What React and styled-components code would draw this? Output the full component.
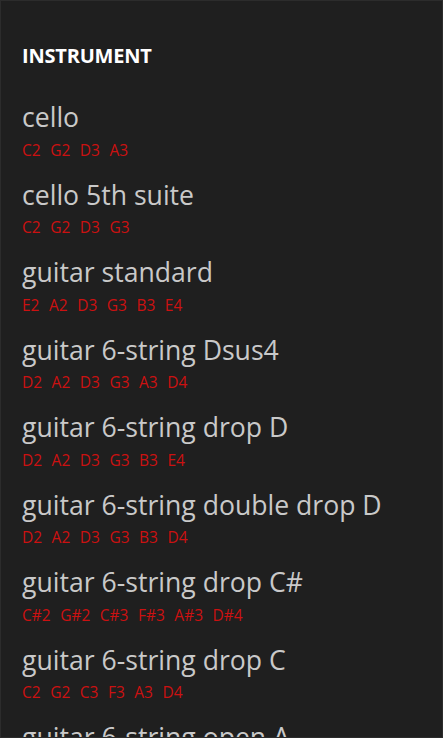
import React from "react";
import styled, { createGlobalStyle } from "styled-components";

const Global = createGlobalStyle`
  html, body { margin: 0; padding: 0; background: #1f1f1f; }
  * { box-sizing: border-box; }
`;

const Page = styled.div`
  height: 738px;
  overflow: hidden;
  background: #1f1f1f;
  border: 1px solid #2c2c2c;
  padding: 43px 0 0 21px;
  font-family: "Open Sans", "Noto Sans", sans-serif;
`;

const Header = styled.h1`
  margin: 0 0 32px;
  font-size: 20px;
  line-height: 24px;
  font-weight: 700;
  color: #ffffff;
  letter-spacing: -0.2px;
`;

const List = styled.ul`
  list-style: none;
  margin: 0;
  padding: 0;
`;

const Item = styled.li`
  height: 77.5px;
`;

const Title = styled.div`
  font-size: 26.6px;
  line-height: 34px;
  color: #c9c9c9;
  white-space: nowrap;
`;

const Notes = styled.div`
  display: flex;
  gap: 9.5px;
  margin-top: 5.5px;
  font-size: 15.5px;
  line-height: 20px;
  color: #cc1111;
`;

const items = [
  ["cello", ["C2", "G2", "D3", "A3"]],
  ["cello 5th suite", ["C2", "G2", "D3", "G3"]],
  ["guitar standard", ["E2", "A2", "D3", "G3", "B3", "E4"]],
  ["guitar 6-string Dsus4", ["D2", "A2", "D3", "G3", "A3", "D4"]],
  ["guitar 6-string drop D", ["D2", "A2", "D3", "G3", "B3", "E4"]],
  ["guitar 6-string double drop D", ["D2", "A2", "D3", "G3", "B3", "D4"]],
  ["guitar 6-string drop C#", ["C#2", "G#2", "C#3", "F#3", "A#3", "D#4"]],
  ["guitar 6-string drop C", ["C2", "G2", "C3", "F3", "A3", "D4"]],
  ["guitar 6-string open A", ["E2", "A2", "C#3", "E3", "A3", "E4"]],
];

export default function App() {
  return (
    <>
      <Global />
      <Page>
        <Header>INSTRUMENT</Header>
        <List>
          {items.map(([name, notes]) => (
            <Item key={name}>
              <Title>{name}</Title>
              <Notes>
                {notes.map((n, i) => (
                  <span key={i}>{n}</span>
                ))}
              </Notes>
            </Item>
          ))}
        </List>
      </Page>
    </>
  );
}
